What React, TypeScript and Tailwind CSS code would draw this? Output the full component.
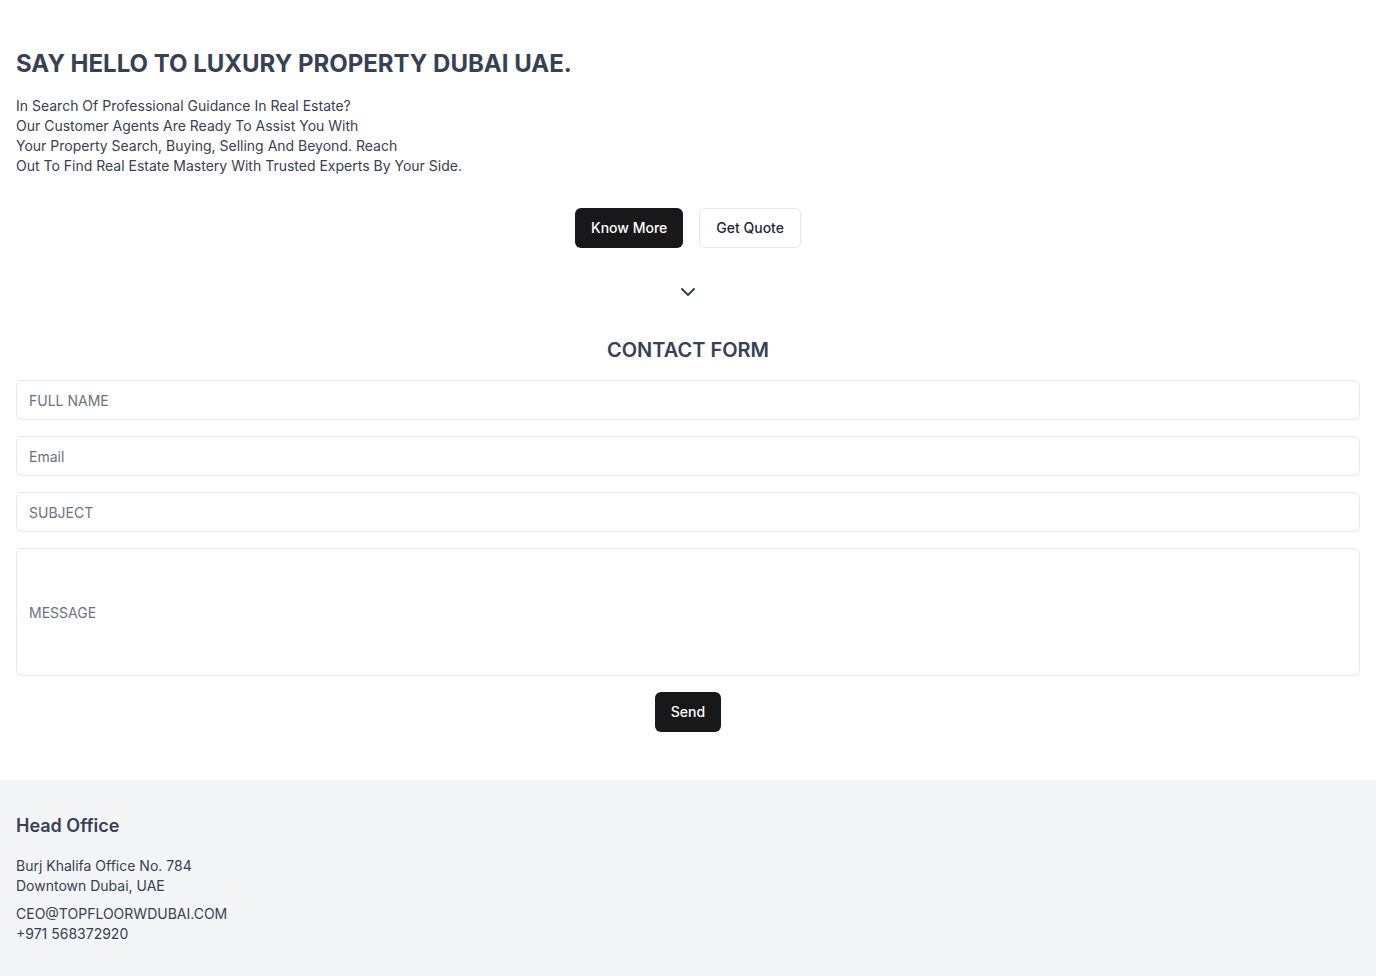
import React from 'react';
import { ChevronDown } from 'lucide-react';

const font = { fontFamily: 'Inter, "Noto Sans", sans-serif' };

const inputCls =
  'w-full h-10 rounded-md border border-gray-200 bg-white px-3 text-sm text-gray-700 placeholder:text-gray-500 outline-none';

export default function App() {
  return (
    <div style={font} className="min-h-screen bg-white text-gray-700">
      <section className="px-4 pt-12 pb-12">
        <h1 className="text-2xl font-bold text-gray-700">SAY HELLO TO LUXURY PROPERTY DUBAI UAE.</h1>
        <p className="mt-4 text-sm leading-5 text-gray-700">
          In Search Of Professional Guidance In Real Estate?
          <br />
          Our Customer Agents Are Ready To Assist You With
          <br />
          Your Property Search, Buying, Selling And Beyond. Reach
          <br />
          Out To Find Real Estate Mastery With Trusted Experts By Your Side.
        </p>

        <div className="mt-8 flex justify-center gap-4">
          <button className="h-10 rounded-md bg-[#18181b] px-4 text-sm font-medium text-white">Know More</button>
          <button className="h-10 rounded-md border border-gray-200 bg-white px-4 text-sm font-medium text-gray-800">
            Get Quote
          </button>
        </div>

        <div className="mt-8 flex justify-center">
          <ChevronDown className="h-6 w-6 text-gray-700" strokeWidth={2} />
        </div>

        <h2 className="mt-8 text-center text-xl font-semibold text-gray-700">CONTACT FORM</h2>

        <form className="mt-4 flex flex-col gap-4" onSubmit={(e) => e.preventDefault()}>
          <input className={inputCls} placeholder="FULL NAME" />
          <input className={inputCls} placeholder="Email" />
          <input className={inputCls} placeholder="SUBJECT" />
          <textarea
            className="h-32 w-full resize-none rounded-md border border-gray-200 bg-white px-3 pt-[54px] text-sm leading-5 text-gray-700 placeholder:text-gray-500 outline-none"
            placeholder="MESSAGE"
          />
          <div className="flex justify-center">
            <button className="h-10 rounded-md bg-[#18181b] px-4 text-sm font-medium text-white">Send</button>
          </div>
        </form>
      </section>

      <footer className="bg-gray-100 px-4 pt-8 pb-12">
        <h3 className="text-lg font-semibold text-gray-700">Head Office</h3>
        <p className="mt-4 text-sm leading-5 text-gray-700">
          Burj Khalifa Office No. 784
          <br />
          Downtown Dubai, UAE
        </p>
        <p className="mt-2 text-sm leading-5 text-gray-700">
          CEO@TOPFLOORWDUBAI.COM
          <br />
          +971 568372920
        </p>
      </footer>
    </div>
  );
}
